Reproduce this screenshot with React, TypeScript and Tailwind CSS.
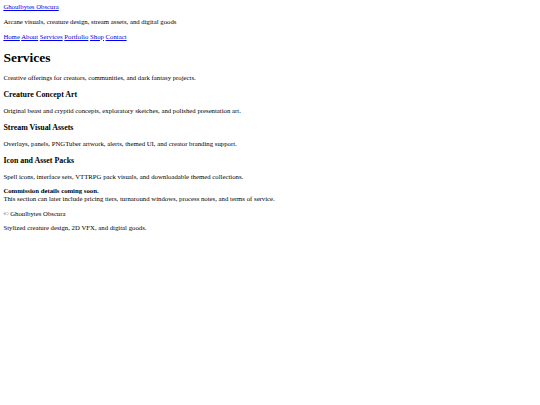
const services = [
  {
    title: 'Creature Concept Art',
    text: 'Original beast and cryptid concepts, exploratory sketches, and polished presentation art.',
  },
  {
    title: 'Stream Visual Assets',
    text: 'Overlays, panels, PNGTuber artwork, alerts, themed UI, and creator branding support.',
  },
  {
    title: 'Icon and Asset Packs',
    text: 'Spell icons, interface sets, VTTRPG pack visuals, and downloadable themed collections.',
  },
];

const navLinks = ['Home', 'About', 'Services', 'Portfolio', 'Shop', 'Contact'];

export default function App() {
  return (
    <div className="min-h-[405px] bg-white p-[3.375px] font-['Liberation_Serif',serif] text-[6.75px] leading-[1.165] text-black">
      {/* Site header */}
      <header>
        <a href="#" className="text-[#0000ee] underline">
          Ghoulbytes Obscura
        </a>
        <p className="my-[6.75px]">Arcane visuals, creature design, stream assets, and digital goods</p>
        <nav>
          {navLinks.map((link, i) => (
            <span key={link}>
              <a href="#" className="text-[#0000ee] underline">
                {link}
              </a>
              {i < navLinks.length - 1 ? ' ' : ''}
            </span>
          ))}
        </nav>
      </header>

      <main>
        <h1 className="my-[9.05px] text-[13.5px] leading-[1.165] font-bold">Services</h1>
        <p className="my-[6.75px]">Creative offerings for creators, communities, and dark fantasy projects.</p>

        {services.map((s) => (
          <section key={s.title}>
            <h3 className="my-[7.9px] text-[7.9px] leading-[1.165] font-bold">{s.title}</h3>
            <p className="my-[6.75px]">{s.text}</p>
          </section>
        ))}

        <p className="my-[6.75px]">
          <strong className="font-bold">Commission details coming soon.</strong>
          <br />
          This section can later include pricing tiers, turnaround windows, process notes, and terms of service.
        </p>
      </main>

      {/* Footer */}
      <footer>
        <p className="my-[6.75px]">© Ghoulbytes Obscura</p>
        <p className="my-[6.75px]">Stylized creature design, 2D VFX, and digital goods.</p>
      </footer>
    </div>
  );
}
